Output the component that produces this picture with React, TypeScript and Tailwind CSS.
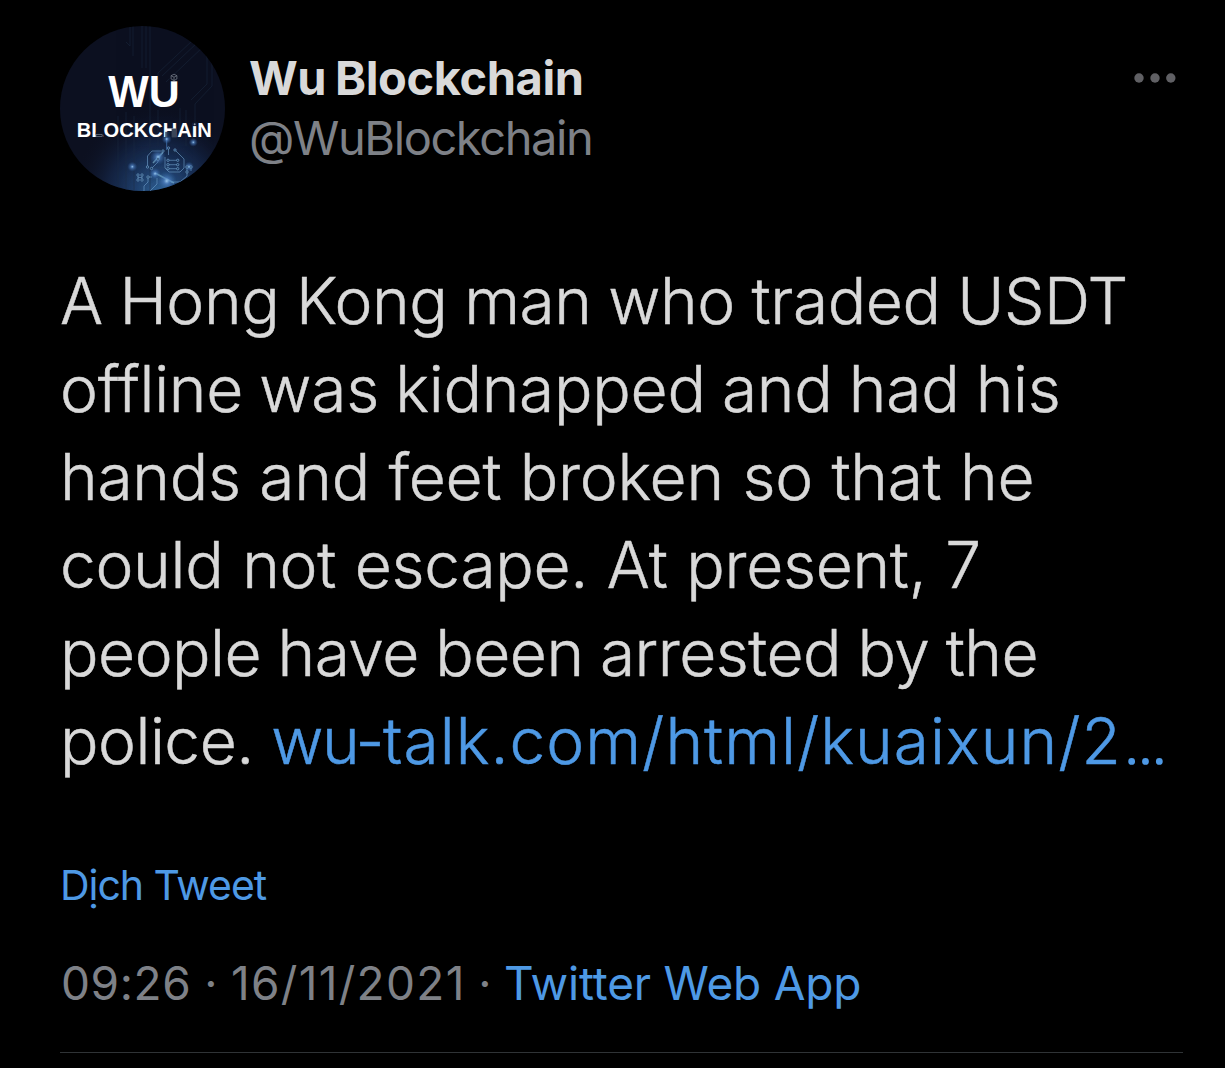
const lines = [
  { text: "A Hong Kong man who traded USDT", className: "tracking-[-0.4px] [word-spacing:-0.9px]" },
  { text: "offline was kidnapped and had his", className: "tracking-[-0.25px] [word-spacing:-1.5px]" },
  { text: "hands and feet broken so that he", className: "tracking-[-0.25px] [word-spacing:0.8px]" },
  { text: "could not escape. At present, 7", className: "tracking-[-0.3px] [word-spacing:1.1px]" },
  { text: "people have been arrested by the", className: "tracking-[-0.5px] [word-spacing:-1.1px]" },
];

// [x, y, radius] of the lit nodes on the circuit board
const glows = [
  [72.3, 140.7, 5],
  [133.3, 116.3, 4.5],
  [95, 147.7, 6],
  [106.7, 155, 10],
  [98, 131, 8],
  [129, 140.7, 5],
  [106.7, 113, 5],
];

const nodes = [
  [87.5, 141], [91.5, 142.5], [98, 133], [103, 125], [108.5, 122], [115, 124],
  [108, 134.3], [108, 138.7], [108, 142.7], [117.7, 134.3], [117.7, 138.7], [117.7, 142.7],
  [78, 149], [82, 149], [78, 154], [82, 154], [88, 151], [127, 141], [131, 141], [127, 146],
];

function Avatar() {
  return (
    <svg className="size-[165px] shrink-0" viewBox="0 0 165 165">
      <defs>
        <clipPath id="round">
          <circle cx="82.5" cy="82.5" r="82.5" />
        </clipPath>
        <radialGradient id="haze" cx="100" cy="168" r="88" gradientUnits="userSpaceOnUse">
          <stop offset="0" stopColor="#32679a" />
          <stop offset="0.3" stopColor="#23487a" stopOpacity="0.8" />
          <stop offset="0.6" stopColor="#182f58" stopOpacity="0.55" />
          <stop offset="1" stopColor="#0c1020" stopOpacity="0" />
        </radialGradient>
        <radialGradient id="glow">
          <stop offset="0" stopColor="#9cc9ee" />
          <stop offset="0.3" stopColor="#5488cc" stopOpacity="0.65" />
          <stop offset="1" stopColor="#2c5d9c" stopOpacity="0" />
        </radialGradient>
      </defs>
      <g clipPath="url(#round)">
        <rect width="165" height="165" fill="#0c1020" />
        <rect width="165" height="165" fill="url(#haze)" />
        <g fill="none" stroke="#1c2b42" strokeWidth="0.8" opacity="0.6">
          <path d="M82 0V42M86 0V42M90 0V165M73 0V30M70 0V20L66 16" />
          <path d="M133 14L98 47V75M138 16L102 50M144 20L106 56M152 34V60L135 78V110M147 30V58L131 74" />
          <path d="M58 90V165M66 86V165M74 90V165M98 84V120M120 82V110M126 84V120" />
        </g>
        <g fill="none" stroke="#6d9cc6" strokeWidth="0.9" opacity="0.7">
          <path d="M87.5 141V130L92 125H101M91.5 142.5L98 136V133L103 127" />
          <path d="M108.5 122V129M105 131V142L109 146H120L124 142V133L115 124" />
          <path d="M108 134.3H117.7M108 138.7H117.7M108 142.7H117.7" />
          <path d="M78 149V154M82 149V154M78 151.5H82M88 151V156L84 160V165M92 151H88M97 152V158L90 165M127 141V150L120 156H111M131 141V145" />
        </g>
        <path d="M106.7 98V124" stroke="#4a7fc0" strokeWidth="0.9" opacity="0.8" />
        <path d="M95 147L114 157M93 137L103 126" stroke="#8cc8d8" strokeWidth="1.5" opacity="0.6" />
        {glows.map(([x, y, r]) => (
          <circle key={`${x}-${y}`} cx={x} cy={y} r={r} fill="url(#glow)" />
        ))}
        {nodes.map(([x, y]) => (
          <circle key={`${x}-${y}`} cx={x} cy={y} r="1.2" fill="#17375f" stroke="#7cabd4" strokeWidth="0.6" />
        ))}
      </g>
      <g fill="#fff" fontFamily="'Liberation Sans', Arial, sans-serif" fontWeight="700">
        <text x="48.3" y="80.6" fontSize="44.6" textLength="71.5" lengthAdjust="spacingAndGlyphs">WU</text>
        <text x="16.8" y="111" fontSize="19.8" textLength="135" lengthAdjust="spacingAndGlyphs">BLOCKCHAIN</text>
      </g>
      {/* parts of the letters give way to circuit pieces */}
      <path d="M109.5 48h11v7.3h-11z" fill="#0c1020" />
      <path d="M114 48.2l2.9 1.5v3.3L114 54.5 111.1 53v-3.3zM111.1 49.7l2.9 1.5 2.9-1.5M114 51.2v3.3" fill="none" stroke="#7d8491" strokeWidth="0.7" />
      <path d="M35.8 106.4h7.4v5h-7.4z" fill="#0c1426" />
      <path d="M36 108.5h6.2v2H36z" fill="none" stroke="#7a808c" strokeWidth="0.7" />
      <path d="M105.2 105.8h4.2v5.6h-4.2z" fill="#17304f" opacity="0.8" />
      <path d="M111.6 102.5h5v8.9h-5z" fill="#3a4558" />
      <path d="M132.2 96.5h5v3.6h-5z" fill="#0f1a33" />
      <circle cx="134.7" cy="98.3" r="1" fill="#8a93a3" />
    </svg>
  );
}

export default function App() {
  return (
    <div className="h-[1068px] w-[1225px] overflow-hidden bg-black pt-[26px] font-['Inter','Liberation_Sans',sans-serif] text-[#d9d9d9]">
      <header className="flex items-start pr-[49px] pl-[60px]">
        <Avatar />
        <div className="ml-6 pt-[22px] text-[47px] leading-[60px] whitespace-nowrap">
          <h1 className="font-bold tracking-[-0.4px] [word-spacing:-2px]">Wu Blockchain</h1>
          <p className="tracking-[-1.4px] text-[#7e8187]">@WuBlockchain</p>
        </div>
        <button className="mt-[47px] ml-auto" aria-label="More">
          <svg className="block h-[10px] w-[42px]" viewBox="0 0 42 10" fill="#606064">
            <circle cx="5" cy="5" r="4.7" />
            <circle cx="21" cy="5" r="4.7" />
            <circle cx="36.8" cy="5" r="4.7" />
          </svg>
        </button>
      </header>

      <div className="mt-[66px] pl-[60px] text-[64px] leading-[88px] font-light whitespace-nowrap [-webkit-text-stroke:0.5px]">
        {lines.map((line) => (
          <p key={line.text} className={line.className}>{line.text}</p>
        ))}
        <p className="tracking-[-0.5px]">
          police.{" "}
          <a className="tracking-[1px] text-[#4e99e5]">
            <span className="tracking-[-1.5px]">wu-</span>talk.com/html/kuaixun/2
            <span className="ml-[3px] text-[49px] leading-none [-webkit-text-stroke:1.6px]">…</span>
          </a>
        </p>
      </div>

      <p className="mt-[76px] pl-[60px] text-[41px] leading-[48px] tracking-[-1.05px] text-[#4e99e5]">Dịch Tweet</p>

      <div className="mt-[46px] flex pl-[61px] text-[46px] leading-[56px] whitespace-nowrap text-[#7e8187]">
        <span className="w-[136px] tracking-[0.6px]">09:26</span>
        <span className="w-[28px] text-center">·</span>
        <span className="ml-[6px] w-[240px] tracking-[1.3px]">16/11/2021</span>
        <span className="w-[28px] text-center">·</span>
        <span className="ml-[5px] tracking-[-0.2px] text-[#4e99e5]">Twitter Web App</span>
      </div>

      <hr className="mt-[41px] mr-[42px] ml-[60px] border-[#2f3336]" />
    </div>
  );
}
